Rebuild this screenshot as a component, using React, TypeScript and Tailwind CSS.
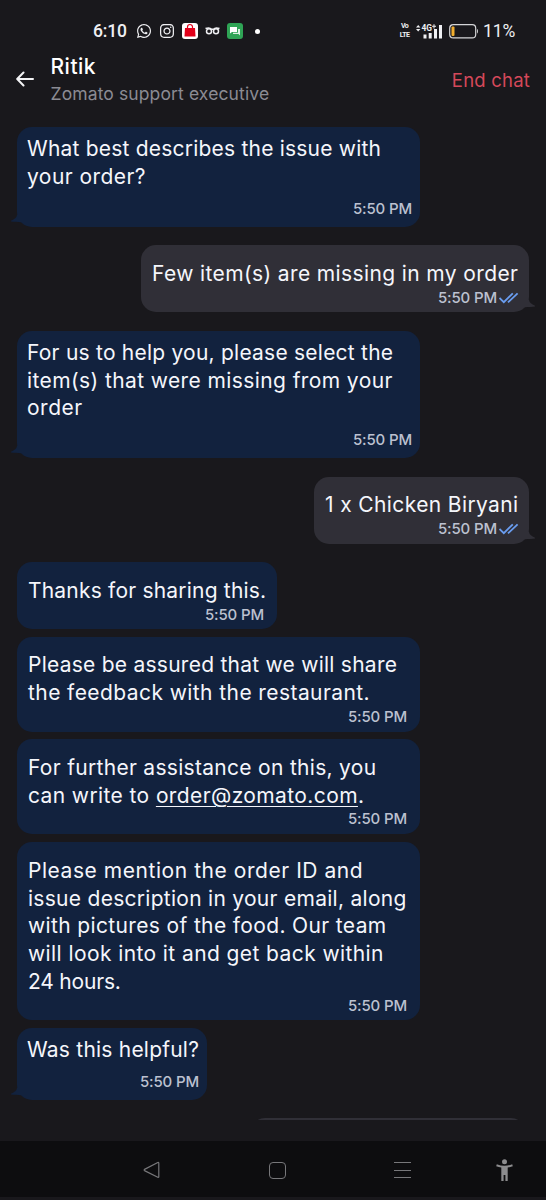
import { type ReactNode } from "react";
import { FaInstagram, FaWhatsapp } from "react-icons/fa";

type Line = { text: ReactNode; tracking: string };

type Message = {
  id: number;
  from: "agent" | "user";
  lines: Line[];
  // size and inner padding of the bubble
  box: string;
  metaClass: string;
  tail?: boolean;
};

const MESSAGES: Message[] = [
  {
    id: 1,
    from: "agent",
    lines: [
      { text: "What best describes the issue with", tracking: "tracking-[0.21px]" },
      { text: "your order?", tracking: "tracking-[0.45px]" },
    ],
    box: "w-[403px] h-[100px] mt-[17.2px] pt-[8.3px] pl-[10px] pr-2",
    metaClass: "pb-[8px]",
    tail: true,
  },
  {
    id: 2,
    from: "user",
    lines: [{ text: "Few item(s) are missing in my order", tracking: "tracking-[0.38px]" }],
    box: "w-[388px] h-[67px] mt-[18.3px] pt-[14.5px] pl-[11px] pr-[10px]",
    metaClass: "pb-[5px]",
    tail: true,
  },
  {
    id: 3,
    from: "agent",
    lines: [
      { text: "For us to help you, please select the", tracking: "tracking-[0.23px]" },
      { text: "item(s) that were missing from your", tracking: "tracking-[0.4px]" },
      { text: "order", tracking: "tracking-[0.5px]" },
    ],
    box: "w-[403px] h-[127.5px] mt-[18.4px] pt-2 pl-[10px] pr-2",
    metaClass: "pb-[8px]",
    tail: true,
  },
  {
    id: 4,
    from: "user",
    lines: [{ text: "1 x Chicken Biryani", tracking: "tracking-[0.38px]" }],
    box: "w-[215px] h-[67px] mt-[18.4px] pt-[14.5px] pl-[11px] pr-[10px]",
    metaClass: "pb-[5px]",
    tail: true,
  },
  {
    id: 5,
    from: "agent",
    lines: [{ text: "Thanks for sharing this.", tracking: "tracking-[0.2px]" }],
    box: "w-[260px] h-[67px] mt-[18.5px] pt-[14.5px] pl-[11px] pr-[13px]",
    metaClass: "pb-[5px]",
  },
  {
    id: 6,
    from: "agent",
    lines: [
      { text: "Please be assured that we will share", tracking: "tracking-[0.25px]" },
      { text: "the feedback with the restaurant.", tracking: "tracking-[0.42px]" },
    ],
    box: "w-[403px] h-[95px] mt-[7.7px] pt-[14.5px] pl-[11px] pr-[13px]",
    metaClass: "pb-[5px]",
  },
  {
    id: 7,
    from: "agent",
    lines: [
      { text: "For further assistance on this, you", tracking: "tracking-[0.3px]" },
      {
        text: (
          <>
            can write to{" "}
            <a className="underline decoration-1 underline-offset-[3px]">order@zomato.com</a>.
          </>
        ),
        tracking: "tracking-[0.39px]",
      },
    ],
    box: "w-[403px] h-[95px] mt-[7.5px] pt-[14.5px] pl-[11px] pr-[13px]",
    metaClass: "pb-[5px]",
  },
  {
    id: 8,
    from: "agent",
    lines: [
      { text: "Please mention the order ID and", tracking: "tracking-[0.55px]" },
      { text: "issue description in your email, along", tracking: "tracking-[0.28px]" },
      { text: "with pictures of the food. Our team", tracking: "tracking-[0.36px]" },
      { text: "will look into it and get back within", tracking: "tracking-[0.41px]" },
      { text: "24 hours.", tracking: "tracking-[-0.2px]" },
    ],
    box: "w-[403px] h-[178px] mt-[7.5px] pt-[14.8px] pl-[11px] pr-[13px]",
    metaClass: "pb-[5px]",
  },
  {
    id: 9,
    from: "agent",
    lines: [{ text: "Was this helpful?", tracking: "tracking-[0.22px]" }],
    box: "w-[190px] h-[72px] mt-2 pt-2 pl-[10px] pr-2",
    metaClass: "pb-[8px]",
    tail: true,
  },
];

const DoubleCheck = () => (
  <svg width="20" height="12" viewBox="0 0 20 12" fill="none" stroke="#6a9df0" strokeWidth="1.8">
    <path d="M0.500 6 4.800 10.200 13.800 1.300" />
    <path d="M9 10.400 18.600 1.300" />
  </svg>
);

const Bubble = ({ message }: { message: Message }) => {
  const isUser = message.from === "user";
  return (
    <div
      className={`relative flex shrink-0 flex-col rounded-[15px] ${message.box} ${
        isUser ? "self-end bg-[#302f37]" : "self-start bg-[#12223e]"
      }`}
    >
      {message.lines.map((line, i) => (
        <p key={i} className={`whitespace-nowrap text-[21px] leading-[27.75px] text-[#f5f6fb] ${line.tracking}`}>
          {line.text}
        </p>
      ))}
      <div className={`mt-auto flex items-center justify-end ${message.metaClass}`}>
        <span className="text-[15px] leading-5 font-medium tracking-[-0.15px] text-[#bcc1d0]">5:50 PM</span>
        {isUser && (
          <span className="ml-[2px]">
            <DoubleCheck />
          </span>
        )}
      </div>
      {message.tail && (
        <svg
          className={`absolute bottom-[3px] ${isUser ? "-right-[6px]" : "-left-[6px] -scale-x-100"}`}
          width="14"
          height="10"
          viewBox="0 0 14 10"
        >
          <path d="M8 1C8.500 4 10.500 5 14 6.800V7.600C10 8 4 8.400 0 8V1Z" fill={isUser ? "#302f37" : "#12223e"} />
        </svg>
      )}
    </div>
  );
};

const StatusBar = () => (
  <div className="flex h-[50px] shrink-0 items-center pt-3 pr-[31px] pl-[93px] font-['Roboto',sans-serif] text-[#efeff2]">
    <span className="w-[43px] text-[17.5px] leading-5 font-medium tracking-[-0.2px]">6:10</span>
    <FaWhatsapp className="mr-[7px] size-4" />
    <FaInstagram className="mr-[7px] size-4" />
    <svg width="16" height="16" viewBox="0 0 16 16" className="mr-[7px]">
      <rect width="16" height="16" rx="3" fill="#fff" />
      <path d="M3 5h10l.5 8.500h-11z" fill="#e2001a" />
      <path d="M5.500 6V4a2.500 2.500 0 0 1 5 0v2" fill="none" stroke="#e2001a" strokeWidth="1.200" />
    </svg>
    <svg width="15" height="8" viewBox="0 0 15 8" fill="none" stroke="currentColor" strokeWidth="1.500" className="mr-[7px]">
      <path d="M.5 1.500C3 .7 5.500 1 6.500 2.200h2C9.500 1 12 .7 14.500 1.500" />
      <circle cx="4" cy="4.200" r="2.500" />
      <circle cx="11" cy="4.200" r="2.500" />
    </svg>
    <svg width="16" height="16" viewBox="0 0 16 16">
      <rect width="16" height="16" rx="3" fill="#2fa455" />
      <path d="M3 4h7v5H5l-2 1.500z" fill="#fff" />
      <path d="M11 6h2v6.500L11.500 11H6v-1.200h5z" fill="#d7f0df" />
    </svg>
    <span className="ml-[12px] size-[5px] rounded-full bg-white" />

    <div className="ml-auto flex items-center">
      <div className="mr-[6px] flex w-[11px] flex-col items-center text-[7px] leading-[9px] font-bold tracking-[-0.6px]">
        <span>Vo</span>
        <span>LTE</span>
      </div>
      <svg width="27" height="17" viewBox="0 0 27 17" fill="currentColor" className="mr-[6px]">
        <path d="M0 4.500 2.200 2l2.200 2.500zM0 6h4.400L2.200 8.500z" />
        <text x="5.500" y="8" fontSize="8.500" fontWeight="700" textLength="10.500" lengthAdjust="spacingAndGlyphs">
          4G
        </text>
        <path d="M17.500 1.200h1v1.600H20v1h-1.500v1.600h-1V3.800H16v-1h1.500z" />
        <rect x="7.500" y="11.500" width="3" height="4" />
        <rect x="12.700" y="10" width="3" height="5.500" />
        <rect x="18" y="6" width="3" height="9.500" />
        <rect x="23" y="2" width="3" height="13.500" />
      </svg>
      <svg width="30" height="15" viewBox="0 0 30 15" className="mr-[4px]">
        <rect x="0.700" y="0.700" width="26" height="13.200" rx="3.500" fill="none" stroke="#d5d5d8" strokeWidth="1.200" />
        <rect x="2.500" y="2.500" width="3" height="9.600" rx="1" fill="#f2ae2e" />
        <path d="M28 5v4.600c1.300-.5 1.300-4.100 0-4.600z" fill="#d5d5d8" />
      </svg>
      <span className="text-[17.5px] leading-5 tracking-[-0.2px]">11%</span>
    </div>
  </div>
);

const Header = () => (
  <header className="flex h-[60px] shrink-0 items-center pr-4 pl-4">
    <svg width="18" height="16" viewBox="0 0 18 16" fill="none" stroke="#f4f4f6" strokeWidth="2" className="mt-[-3px]" strokeLinecap="round" strokeLinejoin="round">
      <path d="M17 8H1.500M7.500 1.500 1.200 8l6.300 6.500" />
    </svg>
    <div className="ml-[16.5px] h-full">
      <h1 className="mt-[2.5px] text-[21px] leading-7 font-medium tracking-[0.5px] text-white">Ritik</h1>
      <p className="text-[17.5px] leading-[26px] tracking-[0.12px] whitespace-nowrap text-[#8b8b93]">Zomato support executive</p>
    </div>
    <button className="mt-px ml-auto text-[18.5px] tracking-[0.2px] text-[#d5485a]">End chat</button>
  </header>
);

const NavBar = () => (
  <nav className="flex h-[59px] shrink-0 items-center border-b-[3px] border-[#19181c] bg-[#0d0d0f] pt-[2px] pr-[33px] pl-[143px] text-[#77777a]">
    <svg width="17" height="18" viewBox="0 0 17 18" fill="none" stroke="currentColor" strokeWidth="1.200" strokeLinejoin="round">
      <path d="M15.800 2.200v13.500q0 1-1 .5L1.500 9.600q-.8-.6 0-1.200l13.300-6.900q1-.4 1 .7z" />
    </svg>
    <span className="ml-[109px] size-[17px] rounded-[4px] border border-current" />
    <div className="ml-[108px] flex w-[17px] flex-col gap-[6.300px]">
      <span className="h-px bg-current" />
      <span className="h-px bg-current" />
      <span className="h-px bg-current" />
    </div>
    <svg width="17" height="23" viewBox="0 0 17 23" fill="#8c8c8e" className="ml-auto">
      <circle cx="8.500" cy="2.700" r="2.500" />
      <path d="M.8 5.200c5 2 10.400 2 15.400 0l.6 2c-1.700.7-3.400 1.100-5.100 1.400V22H9.400v-6H7.600v6H5.300V8.600C3.600 8.300 1.900 7.900.2 7.200z" />
    </svg>
  </nav>
);

const App = () => (
  <div className="flex h-[1200px] w-[546px] flex-col overflow-hidden bg-[#19181c] font-['Inter','Liberation_Sans',sans-serif]">
    <StatusBar />
    <Header />
    <main className="flex min-h-0 flex-1 flex-col overflow-hidden pr-[17px] pl-[17px]">
      {MESSAGES.map((message) => (
        <Bubble key={message.id} message={message} />
      ))}
      {/* top edge of the next reply, cut off by the scroll area */}
      <div className="mt-[18px] mr-1 h-[2px] w-[274px] shrink-0 self-end overflow-hidden">
        <div className="h-10 rounded-[14px] bg-[#302f37]" />
      </div>
    </main>
    <NavBar />
  </div>
);

export default App;
